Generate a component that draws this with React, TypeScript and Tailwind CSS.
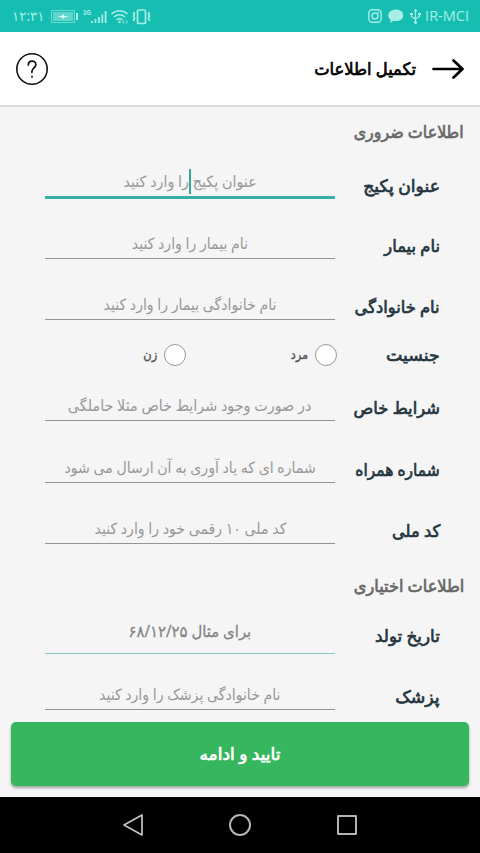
import React from "react";
import clsx from "clsx";

type FieldProps = {
  label: string;
  hint: string;
  height: string;
  labelScale?: string;
  hintStyle?: string;
  line?: string;
  padding?: string;
  focused?: boolean;
};

const strong = "inline-block [-webkit-text-stroke:0.7px_currentColor]";

const Field = ({
  label,
  hint,
  height,
  labelScale = "scale-x-[0.96]",
  hintStyle = "text-[#999] scale-x-[0.91]",
  line = "border-b border-[#949494]",
  padding = "pb-[3px]",
  focused,
}: FieldProps) => {
  return (
    <div className={clsx("flex items-end pr-10 pl-[45px]", height)}>
      <label
        className={clsx(
          "w-[105px] leading-6 text-[17px] text-[#25363f] whitespace-nowrap",
          padding === "pb-[3px]" ? "pb-px" : "pb-[6px]"
        )}
      >
        <span className={clsx("origin-right", strong, labelScale)}>{label}</span>
      </label>
      <div
        className={clsx(
          "relative flex w-[290px] justify-center leading-6 text-[15.5px] whitespace-nowrap",
          line,
          padding
        )}
      >
        <span className={clsx("inline-block", hintStyle)}>{hint}</span>
        {focused && (
          <span className="absolute top-0 left-[144px] h-[25px] w-[2px] bg-[#2fa79b]" />
        )}
      </div>
    </div>
  );
};

const Radio = ({ text }: { text: string }) => {
  return (
    <div className="flex items-center gap-[7px] text-[12.5px] text-[#555]">
      <span className="size-[22px] rounded-full border-[1.5px] border-[#999] bg-white" />
      <span className="inline-block origin-right scale-x-[0.91] [-webkit-text-stroke:0.4px_currentColor]">
        {text}
      </span>
    </div>
  );
};

const StatusBar = () => {
  return (
    <div
      dir="ltr"
      className="flex h-8 items-center justify-between bg-[#16beb2] pl-3 pr-[11px] text-[#a6eee6]"
    >
      <div className="flex items-center">
        <span className="w-[31px] text-[13.5px]">۱۲:۳۱</span>
        <svg className="ml-2" width="102" height="20" viewBox="0 0 102 20" fill="none">
          <rect x="0.5" y="4.5" width="23" height="12" stroke="currentColor" opacity=".6" />
          <rect x="2" y="6" width="20" height="9" fill="currentColor" opacity=".5" />
          <path d="M6 10.500l5-.8 1-1.700 1.500 2 4.500.5-4.500 1-1.500 1.500-1.500-1.700z" fill="#d8fffb" />
          <path d="M26 7v7" stroke="currentColor" strokeWidth="2" />
          <path d="M41 17v-2M44.500 17v-4M48 17v-6M51.300 17V8.500M54.600 17V5" stroke="currentColor" strokeWidth="1.800" />
          <text x="32" y="9" fontSize="8" fontFamily="Roboto" fontWeight="700" fill="currentColor" textLength="8" lengthAdjust="spacingAndGlyphs">3G</text>
          <path d="M60.500 8c4.500-4.500 11.500-4.500 16 0M63 11c3-3 8-3 11 0M65.500 14c2-1.800 4-1.800 6 0" stroke="currentColor" strokeWidth="1.500" />
          <circle cx="68.500" cy="16" r="1.300" fill="currentColor" />
          <path d="M73 14.500l-1.300 1.500 1.300 1.500M75 14.500l1.300 1.500-1.300 1.500" stroke="currentColor" />
          <rect x="86.500" y="4" width="8" height="13.500" rx="1" stroke="currentColor" strokeWidth="1.700" />
          <path d="M82.500 6l1 2-1 2 1 2-1 3M98.500 6l-1 2 1 2-1 2 1 3" stroke="currentColor" strokeWidth="1.700" />
        </svg>
      </div>
      <div className="flex items-center">
        <svg width="56" height="18" viewBox="0 0 56 18" fill="none" stroke="currentColor">
          <rect x=".8" y="2.800" width="12.400" height="12.400" rx="3.500" strokeWidth="1.400" />
          <circle cx="7" cy="9" r="3" strokeWidth="1.400" />
          <circle cx="10.500" cy="5.500" r=".6" fill="currentColor" strokeWidth=".5" />
          <path d="M28 2.500c4.200 0 7.300 2.500 7.300 6S32.200 14 28 14c-1 0-1.500 0-2.500-.3L22 16l.5-3.500C21 11.500 20.300 10 20.300 8.500c0-3.500 3.500-6 7.700-6z" fill="currentColor" stroke="none" />
          <path d="M47.500 3v13M43.500 6.500v3l4 2.500 4-2.500v-3" strokeWidth="1.200" />
          <path d="M47.500 1.500l2 3h-4zM42 6h3v2h-3zM50 6h3v2h-3z" fill="currentColor" stroke="none" />
          <circle cx="47.500" cy="15.500" r="1.500" fill="currentColor" stroke="none" />
        </svg>
        <span className="ml-px text-[14.5px] font-['Open_Sans']">IR-MCI</span>
      </div>
    </div>
  );
};

const Header = () => {
  return (
    <header className="flex h-[75px] items-center border-b-2 border-[#dcdcdc] bg-white px-4">
      <svg width="32" height="22" viewBox="0 0 32 22" fill="none" stroke="#000" strokeWidth="2.700" strokeLinecap="round" strokeLinejoin="round">
        <path d="M1.500 11H30M21.500 2.500L30.500 11l-9 8.500" />
      </svg>
      <h1 className="mr-4 text-[17px] whitespace-nowrap">
        <span className={clsx("origin-right scale-x-[0.96]", strong)}>تکمیل اطلاعات</span>
      </h1>
      <svg className="mr-auto" width="32" height="32" viewBox="0 0 32 32" fill="none" stroke="#111" strokeLinecap="round">
        <circle cx="16" cy="16" r="15.200" strokeWidth="1.600" />
        <path d="M12.300 12c0-5.200 7.600-5.200 7.600-.5 0 3.300-4 3.500-4 7v.8" strokeWidth="1.700" />
        <circle cx="16" cy="23.700" r="1" fill="#111" stroke="none" />
      </svg>
    </header>
  );
};

const App = () => {
  return (
    <div
      dir="rtl"
      className="flex h-[853px] w-[480px] flex-col overflow-hidden bg-[#f5f5f5] font-['Noto_Sans','DejaVu_Sans',sans-serif]"
    >
      <StatusBar />
      <Header />

      <main className="h-[615px]">
        <h2 className="flex h-[50px] items-center pr-4 text-[17px] text-[#686868]">
          <span className={clsx("origin-right scale-x-[0.935]", strong)}>اطلاعات ضروری</span>
        </h2>
        <Field
          label="عنوان پکیج"
          hint="عنوان پکیج را وارد کنید"
          height="h-[42px]"
          labelScale="scale-x-[1.01]"
          hintStyle="text-[#999] scale-x-[0.925]"
          line="border-b-[3px] border-[#3aafa4]"
          focused
        />
        <Field label="نام بیمار" hint="نام بیمار را وارد کنید" height="h-[60px]" />
        <Field label="نام خانوادگی" hint="نام خانوادگی بیمار را وارد کنید" height="h-[61px]" />
        <div className="flex h-[70px] items-center pr-10">
          <span className="w-[103px] text-[17px] text-[#25363f]">
            <span className={clsx("origin-right scale-x-[1.02]", strong)}>جنسیت</span>
          </span>
          <div className="w-[151px]">
            <Radio text="مرد" />
          </div>
          <Radio text="زن" />
        </div>
        <Field
          label="شرایط خاص"
          hint="در صورت وجود شرایط خاص مثلا حاملگی"
          height="h-[31px]"
          hintStyle="text-[#999] scale-x-[0.925]"
        />
        <Field
          label="شماره همراه"
          hint="شماره ای که یاد آوری به آن ارسال می شود"
          height="h-[62px]"
          labelScale="scale-x-[0.91]"
        />
        <Field label="کد ملی" hint="کد ملی ۱۰ رقمی خود را وارد کنید" height="h-[61px]" />
        <h2 className="flex h-[84px] items-center pr-4 text-[17px] text-[#686868]">
          <span className={clsx("origin-right scale-x-[0.95]", strong)}>اطلاعات اختیاری</span>
        </h2>
        <Field
          label="تاریخ تولد"
          hint="برای مثال ۶۸/۱۲/۲۵"
          height="h-[26px]"
          labelScale="scale-x-[0.985]"
          line="border-b border-[#86cbc5]"
          padding="pb-[10px]"
          hintStyle="text-[#858585] scale-x-[0.96] [-webkit-text-stroke:0.3px_currentColor]"
        />
        <Field
          label="پزشک"
          hint="نام خانوادگی پزشک را وارد کنید"
          height="h-[56px]"
          labelScale="scale-x-[1.02]"
        />
      </main>

      <div className="h-[75px] px-[11px]">
        <button className="h-16 w-full rounded-[5px] bg-[#36b65f] text-[17px] text-white shadow-[0_2px_3px_rgba(0,0,0,0.35)]">
          <span className={strong}>تایید و ادامه</span>
        </button>
      </div>

      <nav dir="ltr" className="flex h-14 items-center justify-between bg-black px-[123px]">
        <svg width="20" height="24" viewBox="0 0 20 24" fill="none" stroke="#c4c4c4" strokeWidth="1.700" strokeLinejoin="round">
          <path d="M19 2v20L1 12z" />
        </svg>
        <span className="size-[22px] rounded-full border-2 border-[#b4b4b4]" />
        <span className="size-5 rounded-[1px] border-2 border-[#b4b4b4]" />
      </nav>
    </div>
  );
};

export default App;
